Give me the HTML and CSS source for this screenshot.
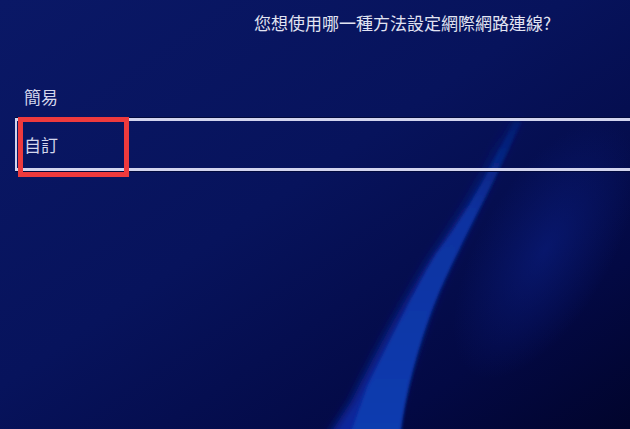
FILE: index.html
```html
<!DOCTYPE html>
<html lang="zh-Hant">
<head>
<meta charset="utf-8">
<title>網際網路連線設定</title>
<link rel="stylesheet" href="styles.css">
</head>
<body>
<div class="screen">
  <svg class="backdrop" width="630" height="429" viewBox="0 0 630 429" aria-hidden="true">
    <defs>
      <linearGradient id="base" x1="0" y1="0" x2="1" y2="1">
        <stop offset="0" stop-color="#0a1866"/>
        <stop offset="0.45" stop-color="#07135c"/>
        <stop offset="0.8" stop-color="#030944"/>
        <stop offset="1" stop-color="#01042c"/>
      </linearGradient>
      <radialGradient id="glow" cx="545" cy="250" r="120" gradientUnits="userSpaceOnUse" gradientTransform="translate(545 250) rotate(30) scale(0.55 1.2) translate(-545 -250)">
        <stop offset="0" stop-color="#0b2088" stop-opacity="0.55"/>
        <stop offset="1" stop-color="#0b2088" stop-opacity="0"/>
      </radialGradient>
      <linearGradient id="core" x1="0" y1="0" x2="0" y2="1">
        <stop offset="0" stop-color="#0a2a90" stop-opacity="0.35"/>
        <stop offset="0.3" stop-color="#0a32a0"/>
        <stop offset="1" stop-color="#0c3cb0"/>
      </linearGradient>
      <linearGradient id="band" x1="0" y1="0" x2="0" y2="1">
        <stop offset="0" stop-color="#0a2494" stop-opacity="0.2"/>
        <stop offset="0.35" stop-color="#0a2698" stop-opacity="0.8"/>
        <stop offset="1" stop-color="#0a289e"/>
      </linearGradient>
      <filter id="edge" x="-20%" y="-20%" width="140%" height="140%">
        <feGaussianBlur stdDeviation="1.6"/>
      </filter>
      <filter id="mid" x="-30%" y="-30%" width="160%" height="160%">
        <feGaussianBlur stdDeviation="5"/>
      </filter>
    </defs>
    <rect width="630" height="429" fill="url(#base)"/>
    <rect width="630" height="429" fill="url(#glow)"/>
    <path d="M512 118 L494 150 C476 186 456 222 430 258 C404 300 376 352 352 400 L326 440 L392 440 C400 400 414 355 432 305 C446 270 466 232 484 196 C494 176 506 150 522 118 Z" fill="url(#band)" filter="url(#mid)"/>
    <path d="M514 122 L498 152 C482 184 462 220 436 254 C414 290 392 338 368 385 L348 440 L400 440 C404 400 416 352 434 305 C448 270 468 232 486 196 C496 176 508 150 522 122 Z" fill="url(#core)" filter="url(#edge)"/>
  </svg>

  <div class="content">
    <h1 class="title">您想使用哪一種方法設定網際網路連線?</h1>
    <ul class="options">
      <li class="option">簡易</li>
      <li class="option option-selected">
        <span class="label">自訂</span>
        <span class="highlight" aria-hidden="true"></span>
      </li>
    </ul>
  </div>
</div>
</body>
</html>
```

FILE: styles.css
```css
html, body {
  margin: 0;
  padding: 0;
  background: #07135e;
}

.screen {
  position: relative;
  width: 630px;
  height: 429px;
  overflow: hidden;
  font-family: "Noto Sans CJK TC", "Noto Sans CJK SC", "Noto Sans", sans-serif;
}

.backdrop {
  position: absolute;
  left: 0;
  top: 0;
  display: block;
}

.content {
  position: relative;
  display: flex;
  flex-direction: column;
}

.title {
  margin: 0;
  padding: 14px 0 0 254px;
  font-size: 17px;
  line-height: 17px;
  font-weight: 400;
  color: #e2e4f2;
  white-space: nowrap;
}

.options {
  list-style: none;
  margin: 57px 0 0 0;
  padding: 0 0 0 15px;
  display: flex;
  flex-direction: column;
}

.option {
  font-size: 17px;
  line-height: 17px;
  color: #d4d7ec;
  padding-left: 9px;
}

.option-selected {
  position: relative;
  margin-top: 13px;
  height: 47px;
  line-height: 47px;
  padding-left: 7px;
  border-top: 3px solid #d2d4ee;
  border-bottom: 3px solid #d2d4ee;
  border-left: 2px solid #d2d4ee;
  box-shadow: 0 -1px 0 #020a3c, 0 1px 0 #020a3c;
  margin-right: -10px;
}

.label {
  display: block;
}

.highlight {
  position: absolute;
  left: 1px;
  top: -4px;
  width: 111px;
  height: 60px;
  box-sizing: border-box;
  border: 5px solid #ee3a3d;
}
```
